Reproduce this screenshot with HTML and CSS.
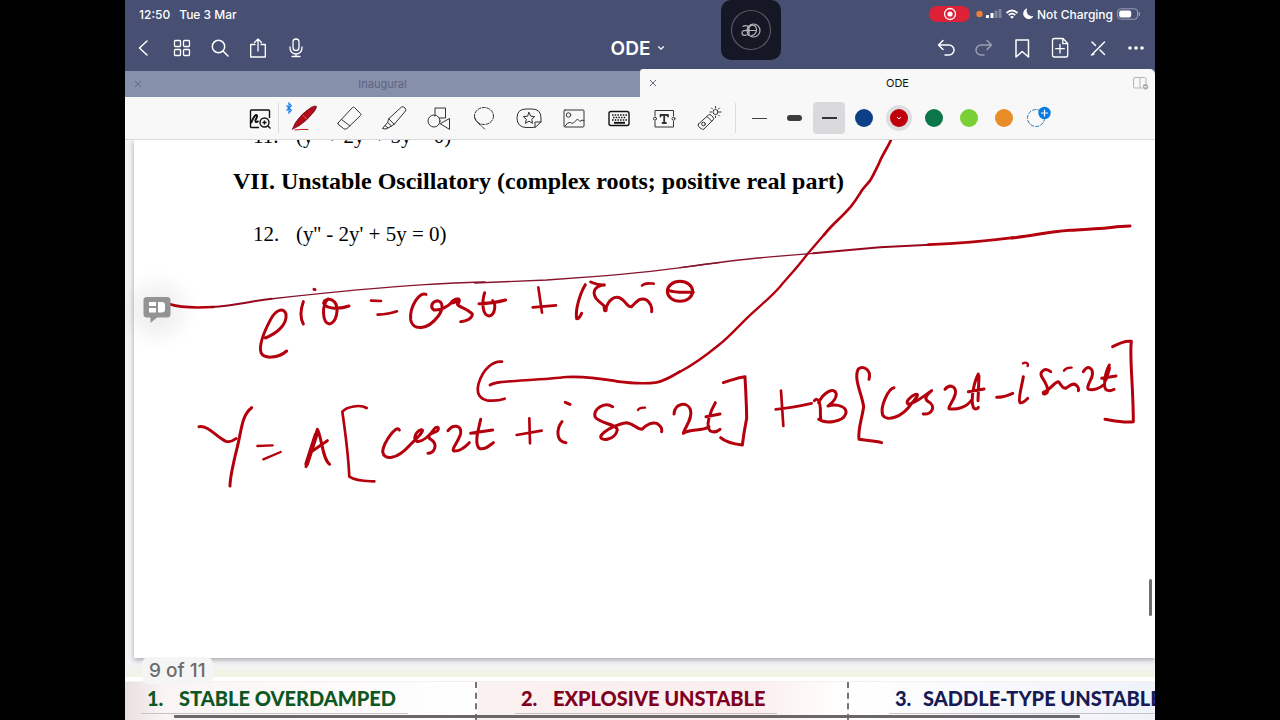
FILE: index.html
```html
<!DOCTYPE html>
<html lang="en">
<head>
<meta charset="utf-8">
<title>ODE</title>
<link rel="stylesheet" href="styles.css">
</head>
<body>
<div class="tablet">
  <header class="top">
    <div class="status">
      <span>12:50</span><span class="date">Tue 3 Mar</span>
      <div class="status-right">
        <span class="rec"><svg width="14" height="14" viewBox="0 0 14 14"><circle cx="7" cy="7" r="5.5" fill="none" stroke="#fff" stroke-width="1.3"/><circle cx="7" cy="7" r="2.6" fill="#fff"/></svg></span>
        <svg class="signals" width="58" height="16" viewBox="0 0 58 16">
          <circle cx="3.500" cy="8" r="3.200" fill="#f08038"/>
          <g fill="#fff"><rect x="10" y="9" width="3" height="3" rx=".6"/><rect x="14.500" y="7" width="3" height="5" rx=".6"/><rect x="18.500" y="4.500" width="3" height="7.500" rx=".6" opacity=".3"/><rect x="22.500" y="3" width="3" height="9" rx=".6" opacity=".3"/></g>
          <g fill="none" stroke="#fff" stroke-width="1.800"><path d="M30.500 7 Q36 2 41.500 7"/><path d="M32.700 9.200 Q36 6 39.300 9.200"/></g><path d="M34 10.800 Q36 9 38 10.800 L36 12.800Z" fill="#fff"/>
          <path d="M50.500 2.800 A5.200 5.200 0 1 0 57 10.500 A6 6 0 0 1 50.500 2.800Z" fill="#fff" stroke="#fff" stroke-width=".8"/>
        </svg>
        <span>Not Charging</span>
        <svg width="24" height="12" viewBox="0 0 24 12"><rect x=".6" y=".8" width="20" height="10.400" rx="3.200" fill="none" stroke="#9aa0b6"/><rect x="2.200" y="2.400" width="12" height="7.200" rx="2" fill="#fff"/><path d="M22.300 4.300 V7.700" stroke="#9aa0b6" stroke-width="1.400"/></svg>
      </div>
    </div>
    <nav class="nav">
      <div class="nav-group">
        <button class="nav-btn" aria-label="Back"><svg class="icon" viewBox="0 0 24 24"><path d="M15 5 L7.500 12 L15 19"/></svg></button>
        <button class="nav-btn" aria-label="Pages"><svg class="icon thin" viewBox="0 0 24 24"><rect x="4.500" y="4.500" width="6" height="6" rx="1"/><rect x="13.500" y="4.500" width="6" height="6" rx="1"/><rect x="4.500" y="13.500" width="6" height="6" rx="1"/><rect x="13.500" y="13.500" width="6" height="6" rx="1"/></svg></button>
        <button class="nav-btn" aria-label="Search"><svg class="icon" viewBox="0 0 24 24"><circle cx="10.500" cy="10.500" r="6.200"/><path d="M15 15 L20 20"/></svg></button>
        <button class="nav-btn" aria-label="Share"><svg class="icon thin" viewBox="0 0 24 24"><path d="M9 8.500 H4.700 V21 H19.300 V8.500 H15 M12 15 V3 M8.500 6.500 L12 3 L15.500 6.500"/></svg></button>
        <button class="nav-btn" aria-label="Record"><svg class="icon thin" viewBox="0 0 24 24"><rect x="9" y="3" width="6" height="11.500" rx="3"/><path d="M6 11 V12 A6 6 0 0 0 18 12 V11 M12 18 V20.500 M8 20.500 H16"/></svg></button>
      </div>
      <button class="title">ODE<svg width="8" height="6" viewBox="0 0 8 6" fill="none" stroke="#fff" stroke-width="1.300"><path d="M1.300 1.500 L4 4.200 L6.700 1.500"/></svg></button>
      <div class="nav-group end">
        <button class="nav-btn" aria-label="Undo"><svg class="icon" viewBox="0 0 24 24"><path d="M9 4.500 L4.500 9 L9 13.500 M4.500 9 H15 A5 5 0 0 1 15 19 H11"/></svg></button>
        <button class="nav-btn dim" aria-label="Redo"><svg class="icon" viewBox="0 0 24 24"><path d="M15 4.500 L19.500 9 L15 13.500 M19.500 9 H9 A5 5 0 0 0 9 19 H12"/></svg></button>
        <button class="nav-btn" aria-label="Bookmark"><svg class="icon" viewBox="0 0 24 24"><path d="M6 4 H18.500 V21 L12.200 15.500 L6 21 Z"/></svg></button>
        <button class="nav-btn" aria-label="Add page"><svg class="icon thin" viewBox="0 0 24 24"><path d="M6.500 2.500 H15 L19.700 7.500 V19 Q19.700 21 18 21 H6.500 Q4.500 21 4.500 19 V4.500 Q4.500 2.500 6.500 2.500 Z M14.800 2.800 V7.700 H19.500 M12 8.500 V17 M7.700 12.700 H16.300"/></svg></button>
        <button class="nav-btn" aria-label="Read-only"><svg class="icon" viewBox="0 0 24 24"><path d="M6 18.500 L18.500 6 M6 6 L9.500 9.500 M14 14 L18.500 18.500 M5.500 19 L8 18"/></svg></button>
        <button class="nav-btn" aria-label="More"><svg class="icon" viewBox="0 0 24 24"><g fill="#fff" stroke="none"><circle cx="6" cy="12" r="1.800"/><circle cx="12" cy="12" r="1.800"/><circle cx="18" cy="12" r="1.800"/></g></svg></button>
      </div>
    </nav>
    <div class="tabs">
      <div class="tab"><button class="tab-x" aria-label="Close Inaugural"><svg width="8" height="8" viewBox="0 0 8 8"><path d="M1 1 L7 7 M7 1 L1 7"/></svg></button><span>Inaugural</span></div>
      <div class="tab active"><button class="tab-x" aria-label="Close ODE"><svg width="8" height="8" viewBox="0 0 8 8"><path d="M1 1 L7 7 M7 1 L1 7"/></svg></button><span>ODE</span>
        <button class="split" aria-label="Split view"><svg width="18" height="14" viewBox="0 0 18 14" fill="none" stroke="#b5b5b9"><path d="M10 12 H3 Q1.500 12 1.500 10.500 V3 Q1.500 1.500 3 1.500 H12.500 Q14 1.500 14 3 V8 M8 1.500 V12"/><circle cx="13.500" cy="10.800" r="2.700" fill="#aaaaae" stroke="none"/><path d="M12 10.800 H15" stroke="#f8f8f8"/></svg></button></div>
    </div>
    <div class="launcher"><svg width="44" height="44" viewBox="0 0 44 44" fill="none"><circle cx="22" cy="22" r="19.500" stroke="#55575f" stroke-width="1.200"/><g stroke="#b4b6ba" stroke-width="1.200"><circle cx="24.500" cy="22.500" r="6.500"/><path d="M13.500 18.500 Q19 16 20 20.500 V28 M14 22.500 H27 M20 22.500 Q12.500 21.500 13 25.500 Q14 29 20 26 M20 26 Q18.500 20 22 17.500 Q27 16 27.500 21.500 Q27.500 26.500 22 28"/></g></svg></div>
  </header>

  <div class="toolbar">
    <button class="tool zoomer" aria-label="Zoom window"><svg class="tl heavy" viewBox="0 0 28 28"><path d="M13 23.500 H5.500 Q4.500 23.500 4.500 22.500 V7 Q4.500 6 5.500 6 H22.500 Q23.500 6 23.500 7 V14"/><path d="M5 19 Q9 10 10.500 11 Q12 12 9.500 16 Q9 19.500 12.500 17" stroke-width="2"/><circle cx="18.500" cy="18.500" r="4.500"/><path d="M16.500 18.500 H20.500 M18.500 16.500 V20.500 M21.700 21.800 L24.500 24.500"/></svg></button>
    <span class="rule"></span>
    <button class="tool" aria-label="Pen"><svg class="tl" viewBox="0 0 28 28"><path d="M2.500 25 L5.500 18.500 Q12 9 21 3.500 Q25.500 1 26.500 2.500 Q26.500 5 22.500 9.500 Q16.500 17 9.500 21.500 Z" fill="#b30d1b" stroke="#5f0910" stroke-width=".8"/><path d="M13 11.500 L17 15" stroke="#dd6b70" stroke-width=".8"/><path d="M5 26 Q12 25 18 25.500" stroke="#c01825"/></svg><svg class="bt" viewBox="0 0 8 12"><path d="M1.500 3.500 L6.300 8.300 L4 10.800 V1.200 L6.300 3.700 L1.500 8.500" fill="none" stroke="#1a80e5" stroke-width="1.200"/></svg></button>
    <button class="tool" aria-label="Eraser"><svg class="tl" viewBox="0 0 28 28"><path d="M3 19 L17.500 3.500 Q18.500 2.500 19.500 3.500 L25.500 9.500 Q26.500 10.500 25.500 11.500 L12 24.500 Q10.500 26 8.500 24.500 L4 21 Q2.300 20 3 19Z M6.500 15.500 L15 22"/></svg></button>
    <button class="tool" aria-label="Highlighter"><svg class="tl" viewBox="0 0 28 28"><path d="M9 14.500 L21.500 3 Q23 2 25 4 Q26.500 5.500 25.500 7 L14.500 20 Z M9 14.500 L7.500 18.500 L11.500 22 L14.500 20 M7.500 18.500 L5 21.500 L8 24 L11.500 22 M5 21.500 L2.500 24.500 L6 25 L8 24"/></svg></button>
    <button class="tool" aria-label="Shapes"><svg class="tl" viewBox="0 0 28 28"><path d="M10 12 V4 H20.500 V14 H14.500"/><circle cx="9" cy="17" r="6"/><path d="M15.500 19.500 L24.500 14.500 V25 Z"/></svg></button>
    <button class="tool" aria-label="Lasso"><svg class="tl" viewBox="0 0 28 28"><ellipse cx="14" cy="12" rx="9.500" ry="8.500" stroke-dasharray="3 1.500"/><path d="M4.500 13 Q6 17 9 20 M9 20 Q12 22 15 25.500" stroke-dasharray="3 1.500"/></svg></button>
    <button class="tool" aria-label="Stickers"><svg class="tl" viewBox="0 0 28 28"><path d="M20 23 Q19 23.500 17 23.500 H11 Q2 23 2 14 Q2 5 11 5 H17 Q26 5 26 14 V18 L20 23.500 V18 H26"/><path d="M14 8.500 L15.700 12.200 L19.700 12.600 L16.700 15.300 L17.600 19.300 L14 17.200 L10.400 19.300 L11.300 15.300 L8.300 12.600 L12.300 12.200Z"/></svg></button>
    <button class="tool" aria-label="Image"><svg class="tl" viewBox="0 0 28 28"><rect x="4" y="6" width="20" height="17" rx="1"/><circle cx="8.500" cy="11" r="2.200"/><path d="M5 22 Q8 17.500 10.500 18.500 Q12 20 13.500 19 L17.500 15 L20 17.500 Q22 15 24 16.500"/></svg></button>
    <button class="tool" aria-label="Keyboard"><svg class="tl heavy" viewBox="0 0 28 28"><rect x="4" y="7.500" width="20" height="14" rx="2"/><path d="M7 11 H22 M8 13.500 H21 M7 16 H22" stroke-width="1.600" stroke-dasharray="1.500 1.200"/><path d="M9 18.800 H20" stroke-width="1.900"/></svg></button>
    <button class="tool" aria-label="Text"><svg class="tl" viewBox="0 0 28 28"><path d="M5 12 V6.500 H23.500 V12 M5 17.500 V23 H23.500 V17.500"/><circle cx="5" cy="14.700" r="1.500"/><circle cx="23.500" cy="14.700" r="1.500"/><path d="M10.500 12.500 V11 H18 V12.500 M14.200 11 V19 M12.500 19 H16" stroke-width="1.800"/></svg></button>
    <button class="tool" aria-label="Laser pointer"><svg class="tl" viewBox="0 0 28 28"><path d="M3.500 20 L13.500 11 Q15 10 16.500 11.500 L18 13 Q19.500 14.500 18 16 L9 25 Q7.500 26 6 24.500 L3.500 22.500 Q2.500 21 3.500 20Z M12 12.500 L16.500 17"/><circle cx="8.500" cy="20" r="1.800"/><circle cx="20.500" cy="8" r="2.500"/><path d="M20.500 2.500 V4 M24.500 4 L23.500 5 M26 8 H24.500 M24.500 12 L23.500 11 M16.500 4 L17.500 5 M15 8 H16.500 M20.500 12 V13.500"/></svg></button>
    <span class="rule second"></span>
    <button class="swatch" aria-label="Fine stroke"><i class="line"></i></button>
    <button class="swatch" aria-label="Thick stroke"><i class="line thick"></i></button>
    <button class="swatch" aria-label="Medium stroke" aria-pressed="true"><i class="line-box"><i class="line medium"></i></i></button>
    <button class="swatch" aria-label="Blue"><i class="dot blue"></i></button>
    <button class="swatch" aria-label="Red" aria-pressed="true"><i class="dot red"><svg width="8" height="6" viewBox="0 0 8 6" fill="none" stroke="#fff"><path d="M2 2 L4 4 L6 2"/></svg></i></button>
    <button class="swatch" aria-label="Green"><i class="dot green"></i></button>
    <button class="swatch" aria-label="Lime"><i class="dot lime"></i></button>
    <button class="swatch" aria-label="Orange"><i class="dot orange"></i></button>
    <button class="swatch" aria-label="Add colour"><svg class="tl" viewBox="0 0 28 28"><circle cx="11" cy="14" r="8.500" stroke="#2b78b5" stroke-dasharray="3.200 2"/><circle cx="19.500" cy="9" r="6.200" fill="#0b7de0" stroke="none"/><path d="M16.500 9 H22.500 M19.500 6 V12" stroke="#fff" stroke-width="1.200"/></svg></button>
  </div>

  <main class="viewer">
    <article class="page">
      <p class="item"><span class="num">11.</span>(y'' + 2y' + 5y = 0)</p>
      <h1>VII. Unstable Oscillatory (complex roots; positive real part)</h1>
      <p class="item"><span class="num">12.</span>(y'' - 2y' + 5y = 0)</p>
      <svg class="ink" viewBox="134 140 1021 518" role="img" aria-label="Handwritten notes">
        <g transform="translate(125 135) scale(.33333)">
          <path class="w8" d="M135 508 C165 518 210 519 265 516"/>
          <path class="w6" d="M260 516 C330 512 380 498 440 491"/>
          <path class="w4" d="M435 492 C560 478 750 458 900 449 C1000 443 1050 440 1080 441"/>
        </g>
        <g transform="translate(240 270) scale(.33333)">
          <path d="M76 204 C110 190 142 165 138 132 C132 112 108 118 92 148 C75 180 56 225 63 248 C72 268 115 265 140 243"/>
          <path d="M190 95 C181 120 181 145 190 162 M222 58 L225 59"/>
          <path d="M264 87 C245 105 246 158 268 162 C290 158 298 115 284 96 C270 82 252 88 251 100 C260 118 300 118 327 108"/>
          <path class="w8" d="M393 92 L423 93 M413 134 C440 133 455 130 471 124"/>
          <path d="M558 73 C538 65 508 110 512 150 C520 182 562 182 595 138 C614 112 606 94 592 92 C574 95 570 112 582 120 C600 122 625 110 640 92 C650 82 662 88 656 98 C640 108 680 112 697 132 C698 144 680 154 662 155"/>
          <path class="w14" d="M638 96 L655 90"/>
        </g>
        <g transform="translate(480 260) scale(.33333)">
          <path class="w4" d="M-16 69 L200 60 L340 50 C480 40 600 24 720 7"/>
          <path d="M14 98 C4 130 8 165 27 168 C47 165 48 130 38 122 M-3 131 C25 131 55 126 77 120"/>
          <path class="w8" d="M175 82 L186 158 M158 142 L228 136"/>
          <path d="M316 74 C300 100 285 150 290 176 C298 178 302 165 305 160"/>
          <path d="M332 66 C345 72 360 76 373 75 C350 76 333 92 348 115 C362 132 380 138 376 150 C385 118 405 106 422 115 C440 125 440 142 455 140 C470 125 480 110 500 120 C513 130 516 145 515 155"/>
          <path class="w14" d="M375 143 L376 150"/>
          <path class="w8" d="M486 77 C495 68 505 70 521 71"/>
          <ellipse cx="600" cy="94" rx="38" ry="30"/><path d="M565 91 C590 100 620 96 640 97"/>
          <path class="w8" d="M600 335 C580 345 560 361 530 367 C500 372 440 370 400 362 C340 352 300 349 260 351 C200 358 100 362 65 366 C50 368 40 369 30 375"/>
          <path class="w8" d="M66 305 C40 302 10 325 -4 370 C-12 400 -2 415 20 421 C40 423 60 421 74 416"/>
        </g>
        <g transform="translate(680 130) scale(.33333)">
          <path class="w8" d="M634 28 C618 62 606 76 598 98 C585 125 578 140 570 152 C558 168 550 172 540 190 C520 222 515 228 505 238 C480 266 450 290 432 315"/>
          <path class="w7" d="M434 312 C410 340 395 358 380 375 C350 415 325 440 300 470 C270 505 230 535 200 565 C160 605 140 627 120 642 C80 675 45 702 0 725"/>
          <path class="w4" d="M0 413 C100 399 180 388 280 380 L400 370"/>
          <path class="w6" d="M400 370 L600 352 L750 344"/>
          <path class="w8" d="M745 344 C850 340 920 333 1000 323"/>
          <path d="M995 324 C1060 317 1100 306 1170 301 C1230 297 1270 296 1310 290 C1330 288 1340 289 1350 288"/>
          <path class="w8" d="M0 725 L-6 728"/>
        </g>
        <path class="join" d="M680 371.700 C700 361.700 712 353 722 342"/>
        <g transform="translate(180 380) scale(.33333)">
          <path d="M57 140 C85 135 110 172 138 184 C152 188 160 182 168 176 M215 83 C185 105 185 150 171 205 C160 250 150 290 150 318"/>
          <path class="w7" d="M232 198 L278 196 M250 238 L302 216"/>
          <path d="M378 260 L412 148 C425 170 428 240 449 253 M397 213 L442 182"/><path class="w14" d="M380 252 L408 165"/>
          <path class="w8" d="M560 84 C540 72 500 80 487 95 C495 150 505 230 508 290 C530 305 560 303 583 304"/>
          <path d="M658 150 C650 130 610 190 608 215 C612 242 650 240 690 195 C720 165 735 150 724 149 C705 155 698 180 712 185 C730 185 750 165 765 144 C780 136 776 152 768 155 C745 163 740 172 755 180 C775 195 762 220 744 220"/>
          <path d="M804 152 C818 132 846 134 842 160 C836 185 812 208 822 213 C838 214 850 207 868 188 M902 118 C895 150 882 190 898 205 C915 212 930 195 940 188 M872 160 L938 150"/>
        </g>
        <g transform="translate(480 340) scale(.33333)">
          <path class="w8" d="M110 285 L185 272 M148 235 L150 310"/>
          <path d="M246 245 C230 265 226 305 258 308 M256 187 L270 193"/>
          <path d="M398 200 C370 183 340 210 345 230 C355 250 412 252 412 270 C405 300 363 305 362 290 C370 270 420 250 440 248 C460 250 470 268 486 268 C500 252 518 246 530 250 C545 260 546 265 545 275"/>
          <path class="w7" d="M474 210 C478 202 485 203 495 203"/>
          <path d="M582 222 C585 188 622 185 631 208 C640 235 615 260 610 280 C630 265 665 275 687 260 M706 188 C690 215 676 258 690 272 C700 278 712 275 720 268 M678 230 L720 222"/>
          <path d="M730 128 C755 120 775 112 795 110 C797 150 800 200 800 235 C795 260 790 290 787 315 C760 312 735 305 722 293"/>
        </g>
        <g transform="translate(760 320) scale(.33333)">
          <path class="w8" d="M63 212 L70 318 M47 268 C80 265 120 258 155 250"/>
          <path d="M163 242 C174 230 180 248 181 264 C182 285 180 292 183 300 M176 248 C192 215 224 200 229 222 C228 245 208 253 204 258 C235 250 264 262 257 282 C248 306 198 313 176 298"/>
          <path d="M327 178 C335 150 310 135 295 147 C280 175 305 220 311 260 C305 300 293 330 297 358 C320 362 345 362 365 368"/>
          <path d="M402 203 C385 205 360 260 368 285 C378 305 425 295 455 250 C473 230 478 220 466 223 C448 230 435 248 445 252 C465 252 495 225 515 212 C500 225 490 235 505 245 C530 258 515 285 490 282"/>
          <path d="M555 208 C570 190 590 200 586 222 C580 245 563 262 567 266 C590 270 620 262 635 240 M655 162 C640 190 632 240 640 262 C645 270 655 266 655 262 M625 215 L672 207 M657 168 L654 242"/>
          <path d="M710 232 C730 232 745 226 758 220 M790 170 C785 200 773 240 780 248 C790 250 798 240 803 235"/><path class="w7" d="M789 130 C797 125 806 130 803 138"/>
          <path d="M872 155 C855 140 838 155 845 170 C855 185 868 205 862 217 C850 230 845 215 855 215 C875 205 885 185 895 185 C905 195 905 205 917 205 C930 195 940 188 948 195 C955 200 957 208 955 212"/><path class="w7" d="M912 152 C918 142 925 142 935 143"/>
          <path d="M970 155 C985 132 1002 145 996 170 C990 185 978 202 986 208 C1000 212 1020 205 1030 195 M1048 135 C1035 160 1028 205 1040 210 C1050 215 1058 210 1062 208 M1025 175 L1068 168"/><path class="w14" d="M1046 145 L1036 178"/>
          <path d="M1058 80 C1080 68 1100 62 1114 64 C1108 110 1120 200 1120 305 C1095 310 1060 302 1035 298"/>
        </g>
      </svg>
    </article>
    <section class="next-page">
      <div class="case green-text"><h2><span class="case-num">1.</span>STABLE OVERDAMPED</h2></div>
      <div class="case red-text"><h2><span class="case-num">2.</span>EXPLOSIVE UNSTABLE</h2></div>
      <div class="case navy-text"><h2><span class="case-num short">3.</span>SADDLE-TYPE UNSTABLE</h2></div>
      <div class="scroll-x"></div>
    </section>
    <div class="count">9 of 11</div>
    <button class="comment" aria-label="Comments"><svg width="28" height="28" viewBox="0 0 28 28"><path d="M4 1 H24 Q27.500 1 27.500 4 V18 Q27.500 21.500 24 21.500 H14 L7.500 27 V21.500 H4 Q.500 21.500 .500 18 V4 Q.500 1 4 1Z" fill="#939393"/><path d="M6 6 H13 V10 H6Z M6 12 H13 V16.500 H6Z M15 6 H19 Q22 6 22 9 V13.500 Q22 16.500 19 16.500 H15Z" fill="#fff"/></svg></button>
    <div class="scroll-y"></div>
  </main>
</div>
</body>
</html>
```
FILE: styles.css
```css
* { box-sizing: border-box; }
body { margin: 0; background: #000; font-family: Inter, "Liberation Sans", sans-serif; }
button { border: 0; padding: 0; margin: 0; background: none; color: inherit; font: inherit; display: flex; align-items: center; justify-content: center; }
svg { display: block; }

.tablet { margin: 0 125px; min-height: 100vh; display: flex; flex-direction: column; background: #f3f3f5; overflow: hidden; }
.top { position: relative; background: #474f72; color: #fff; }
.status { display: flex; align-items: center; height: 28px; padding: 0 14px; font-size: 12px; font-weight: 500; }
.date { margin-left: 9px; }
.status-right { margin-left: auto; display: flex; align-items: center; gap: 4px; }
.signals { margin-right: -1px; }
.rec { display: flex; align-items: center; justify-content: center; width: 41px; height: 16px; border-radius: 8px; background: #dd2238; margin-right: 2px; }

.nav { display: flex; align-items: flex-start; height: 41px; }
.nav-group { display: flex; flex: 1; }
.nav-group.end { justify-content: flex-end; }
.nav-btn { width: 38px; height: 40px; }
.dim { opacity: .45; }
.icon { width: 24px; height: 24px; fill: none; stroke: #fff; stroke-width: 1.5; stroke-linecap: round; stroke-linejoin: round; }
.icon.thin { stroke-width: 1.3; }
.title { gap: 7px; height: 40px; padding-right: 4px; font-size: 19px; font-weight: 600; }

.tabs { display: flex; align-items: flex-end; height: 28px; }
.tab { position: relative; flex: 1; height: 26px; display: flex; align-items: center; justify-content: center; background: #8790aa; color: #5d6480; font-size: 11px; }
.tab.active { height: 28px; background: #f8f8f8; color: #111; border-radius: 3px 5px 0 0; }
.tab-x { position: absolute; left: 8px; top: 0; width: 10px; height: 100%; }
.tab-x path { fill: none; stroke: #666c80; stroke-width: 1; }
.split { position: absolute; right: 5px; top: 0; height: 100%; }
.launcher { position: absolute; left: 50%; top: 0; margin-left: 81px; width: 60px; height: 60px; border-radius: 10px; background: #151824; display: flex; align-items: center; justify-content: center; }

.toolbar { display: flex; align-items: center; justify-content: center; height: 43px; padding-left: 18px; background: #f8f8f8; border-bottom: 1px solid #d9d9dc; }
.tool { position: relative; flex: none; width: 45px; height: 40px; }
.zoomer { width: 36px; }
.tl { width: 28px; height: 28px; flex: none; fill: none; stroke: #333; stroke-width: 1; stroke-linecap: round; stroke-linejoin: round; }
.tl.heavy { stroke: #111; stroke-width: 1.4; stroke-linecap: butt; }
.bt { position: absolute; left: 3px; top: 4px; width: 8px; height: 12px; }
.rule { width: 1px; height: 30px; background: #dcdcde; margin-right: 3px; }
.rule.second { margin: 0 6px 0 3px; }
.swatch { flex: none; width: 35px; height: 40px; }
.line { display: block; width: 15px; height: 1px; background: #444; }
.line.thick { height: 6px; border-radius: 3px; background: #3c3c3e; }
.line.medium { height: 2px; background: #333; }
.line-box { display: flex; align-items: center; justify-content: center; width: 32px; height: 32px; border-radius: 4px; background: #dadadd; }
.dot { display: flex; align-items: center; justify-content: center; width: 18px; height: 18px; border-radius: 50%; }
.blue { background: #0d3f87; }
.red { background: #bd0009; box-shadow: 0 0 0 4px #dedee0; }
.green { background: #0b7748; }
.lime { background: #78d034; }
.orange { background: #e88c28; }

.viewer { position: relative; flex: 1; display: flex; flex-direction: column; overflow: hidden; }
.page { position: relative; flex: 1; margin: 0 0 23px 9px; background: #fff; font-family: "Liberation Serif", serif; color: #000; overflow: hidden; box-shadow: 0 2px 5px #a9a9ae; }
.item { display: flex; margin: 0 0 0 119px; font-size: 21px; line-height: 24px; }
.item:first-child { margin-top: -16px; }
.num { width: 43px; }
.page h1 { margin: 19px 0 27px 99px; font-size: 24px; line-height: 28px; white-space: nowrap; }
.ink { position: absolute; left: 0; top: 0; width: 100%; fill: none; stroke: #b4000d; stroke-width: 9; stroke-linecap: round; stroke-linejoin: round; }
.w4 { stroke-width: 4; stroke: #86142d; }
.w6 { stroke-width: 6; stroke: #96081c; }
.w7 { stroke-width: 7; }
.w8 { stroke-width: 8; }
.w14 { stroke-width: 14; }
.join { display: none; }

.next-page { position: relative; display: grid; grid-template-columns: 350px 372px 1fr; height: 39px; background: #fff; border-top: 1px solid #f4f0ee; box-shadow: 0 -4px 0 #fff, 0 -12px 4px #f3f3e6; font-family: Lato, "Open Sans", sans-serif; white-space: nowrap; }
.case { overflow: hidden; }
.case + .case { border-left: 2px dashed #77727a; }
.case h2 { display: inline-flex; margin: 0; height: 32px; border-bottom: 1px solid #c9c3c6; padding: 0 12px 0 6px; font-size: 20px; font-weight: 900; line-height: 32px; }
.case-num { width: 32px; }
.case-num.short { width: 28px; }
.green-text { color: #0d5724; padding-left: 16px; background: linear-gradient(90deg, #eadfe0, #faf5f5 12%, #fff); }
.red-text { color: #7f001f; padding-left: 38px; background: linear-gradient(90deg, #faf1f1, #fbeeee 75%, #fff); }
.navy-text { color: #161b55; padding-left: 40px; background: linear-gradient(90deg, #fff, #f0f2fa); }
.scroll-x { position: absolute; left: 49px; right: 75px; bottom: 2px; height: 3px; border-radius: 1px; background: #6b6769; }
.count { position: absolute; left: 17px; bottom: 36px; padding: 0 7px; border-radius: 7px; background: #f5f5f5; color: #6c6c6c; font-size: 19px; font-weight: 500; line-height: 27px; }
.comment { position: absolute; left: 18px; top: 156px; border-radius: 50%; box-shadow: 0 0 20px 14px rgba(0, 0, 0, .06); background: rgba(0, 0, 0, .06); }
.scroll-y { position: absolute; right: 3px; top: 439px; width: 3px; height: 37px; border-radius: 2px; background: #6d6d6d; }
```
